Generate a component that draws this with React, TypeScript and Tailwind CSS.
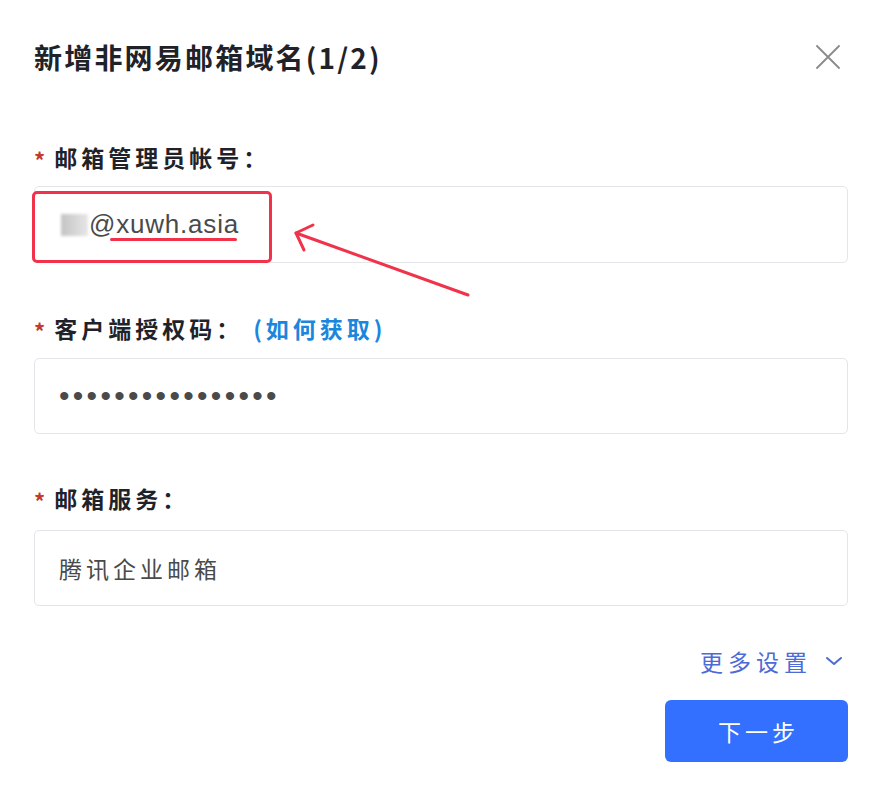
import type { FC } from 'react';

const cjk = '[font-family:"Noto_Sans_CJK_SC","Noto_Sans",sans-serif]';

const Label: FC<{ text: string; extra?: string }> = ({ text, extra }) => (
  <div className={`flex h-[30px] items-center ${cjk}`}>
    <span className="mr-[9px] mt-[4px] text-[22px] font-bold text-[#c4392f]">*</span>
    <span className="text-[23px] font-bold tracking-[4px] text-[#1f2329]">{text}</span>
    {extra && (
      <span className="ml-[10px] text-[23px] font-bold tracking-[4px] text-[#1a86dc]">{extra}</span>
    )}
  </div>
);

const App: FC = () => {
  return (
    <div className={`relative h-[792px] w-[875px] overflow-hidden bg-white pl-[34px] pr-[27px] ${cjk}`}>
      {/* header */}
      <div className="mt-[39px] flex h-[36px] items-center justify-between">
        <h1 className="text-[28px] font-bold tracking-[2.2px] text-[#1f2329]">新增非网易邮箱域名(1/2)</h1>
        <button className="mr-[5px] flex h-[30px] w-[30px] items-center justify-center">
          <svg width="24" height="24" viewBox="0 0 24 24" fill="none" stroke="#8a8a8a" strokeWidth="1.8" strokeLinecap="round">
            <path d="M1 1 L23 23 M23 1 L1 23" />
          </svg>
        </button>
      </div>

      {/* account */}
      <div className="mt-[67px]">
        <Label text="邮箱管理员帐号：" />
        <div className="mt-[14px] flex h-[77px] items-center rounded-[5px] border border-[#e3e5e8] pl-[26px]">
          <div className="mr-[1px] h-[22px] w-[27px] bg-gradient-to-r from-[#c4c4c4] to-[#e6e6e6] blur-[1.5px]" />
          <span className="text-[26px] tracking-[0.8px] text-[#4a4a4a] [font-family:'Liberation_Sans',sans-serif]">
            @xuwh.asia
          </span>
        </div>
      </div>

      {/* auth code */}
      <div className="mt-[50px]">
        <Label text="客户端授权码：" extra="(如何获取)" />
        <div className="mt-[15px] flex h-[76px] items-center rounded-[5px] border border-[#e3e5e8] pl-[24px]">
          <span className="text-[30px] leading-none tracking-[3.3px] text-[#4a4a4a] [font-family:'Liberation_Sans',sans-serif]">
            ••••••••••••••••
          </span>
        </div>
      </div>

      {/* service */}
      <div className="mt-[49px]">
        <Label text="邮箱服务：" />
        <div className="mt-[17px] flex h-[76px] items-center rounded-[5px] border border-[#e3e5e8] pl-[24px]">
          <span className="text-[23px] tracking-[4px] text-[#4a4a4a]">腾讯企业邮箱</span>
        </div>
      </div>

      {/* more settings */}
      <div className="mt-[40px] flex h-[30px] items-center justify-end">
        <span className="text-[23px] tracking-[5px] text-[#4c6bd6]">更多设置</span>
        <svg className="ml-[12px] mr-[4px]" width="20" height="12" viewBox="0 0 20 12" fill="none" stroke="#4c6bd6" strokeWidth="2" strokeLinecap="round" strokeLinejoin="round">
          <path d="M3 3 L10 9 L17 3" />
        </svg>
      </div>

      <div className="mt-[24px] flex justify-end">
        <button className="flex h-[62px] w-[183px] items-center justify-center rounded-[6px] bg-[#3370ff] pl-[4px] text-[23px] tracking-[4px] text-white">
          下一步
        </button>
      </div>

      {/* annotation overlay */}
      <div className="pointer-events-none absolute left-[32px] top-[191px] h-[72px] w-[240px] rounded-[5px] border-[3px] border-[#f0334a]" />
      <div className="pointer-events-none absolute left-[110px] top-[238px] h-[3px] w-[127px] rounded-full bg-[#f0334a]" />
      <svg className="pointer-events-none absolute left-0 top-0" width="875" height="792" fill="none" stroke="#f0334a" strokeWidth="3" strokeLinecap="round" strokeLinejoin="round">
        <path d="M468 295 L296 233" />
        <path d="M313 225 L296 233 L304 250" />
      </svg>
    </div>
  );
};

export default App;
